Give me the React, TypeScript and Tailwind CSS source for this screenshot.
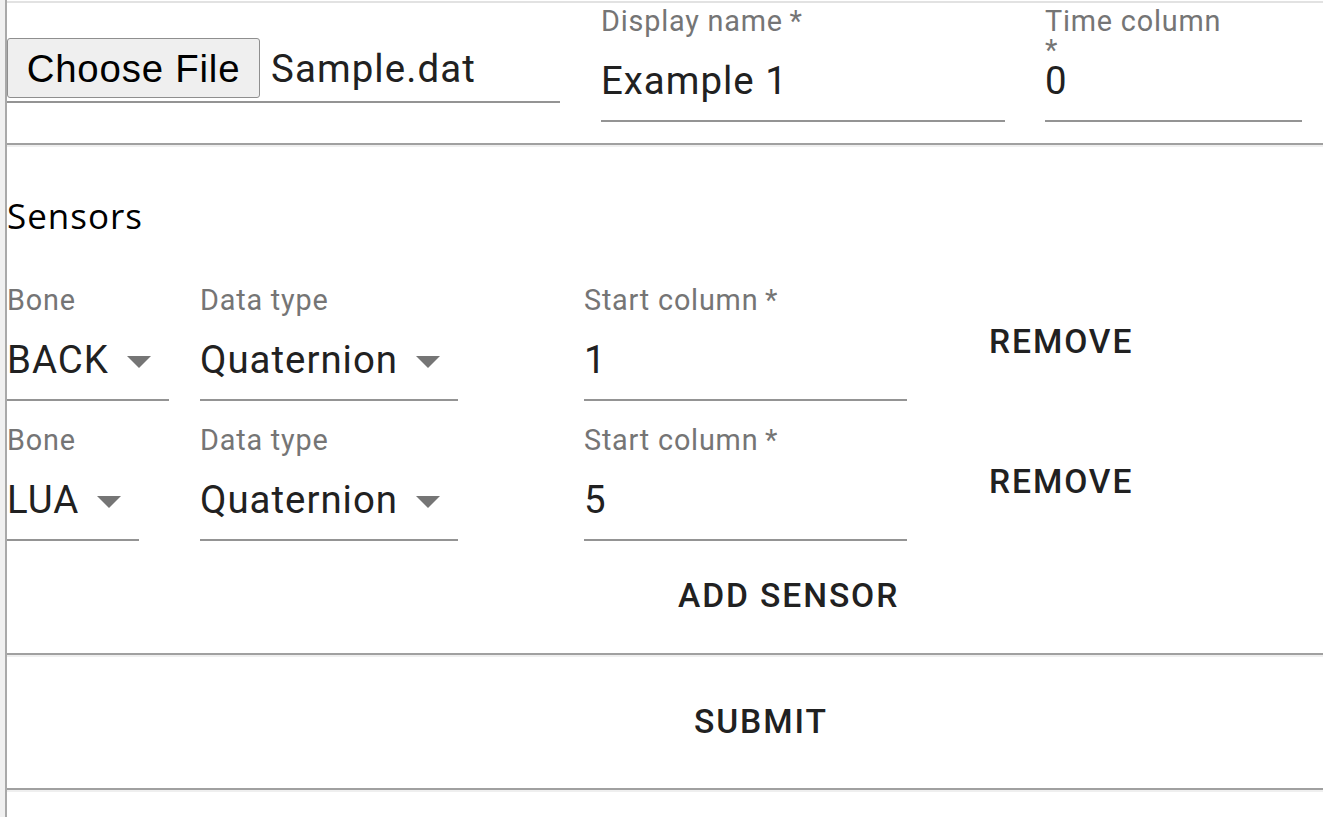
import React from 'react';

interface FieldProps {
    label: React.ReactNode;
    value: string;
    select?: boolean;
    className?: string;
}

const ArrowDropDown = () => (
    <svg viewBox="7 10 10 5" className="w-[24px] h-[12px] fill-[#757575]">
        <path d="M7 10l5 5 5-5z" />
    </svg>
);

const Field: React.FC<FieldProps> = ({ label, value, select, className }) => (
    <div className={`flex flex-col font-['Roboto',sans-serif] ${className ?? ''}`}>
        <div className="h-[28.8px] text-[28.8px] leading-[28.8px] tracking-[0.8px] text-[#757575] whitespace-nowrap">
            {label}
        </div>
        <div className="mt-[22.6px] flex items-start">
            <span className="text-[38.4px] leading-[45px] tracking-[1px] text-[#212121] whitespace-nowrap">{value}</span>
            {select && (
                <span className="w-[60px] pl-[18px] pt-[19.3px] flex">
                    <ArrowDropDown />
                </span>
            )}
        </div>
        <div className="mt-[16.6px] h-[2.4px] bg-[#949494]" />
    </div>
);

const Divider = () => (
    <div className="h-[4px] border-t-[2px] border-t-[#a0a0a0] border-b-[2px] border-b-[#efefef]" />
);

const TextButton: React.FC<{ children: React.ReactNode; className?: string }> = ({ children, className }) => (
    <button
        className={`font-['Roboto',sans-serif] text-[33.6px] leading-[58.8px] font-medium tracking-[1.9px] text-[#212121] uppercase ${className ?? ''}`}
    >
        {children}
    </button>
);

const SensorRow: React.FC<{ bone: string; start: string; className?: string }> = ({ bone, start, className }) => (
    <div className={`flex items-start ${className ?? ''}`}>
        <div className="w-[193px]">
            <Field label="Bone" value={bone} select className="w-fit" />
        </div>
        <div className="w-[384px]">
            <Field label="Data type" value="Quaternion" select className="w-fit" />
        </div>
        <div className="w-[405px]">
            <Field label={<>Start column&thinsp;*</>} value={start} className="w-[323px]" />
        </div>
        <TextButton className="mt-[27px]">Remove</TextButton>
    </div>
);

export default function App() {
    return (
        <div className="flex h-[817px] overflow-hidden bg-white">
            <div className="w-[5px] bg-[#f0f0f0]" />
            <div className="w-[2px] bg-[#a9a9a9]" />
            <div className="flex-1 min-w-0 flex flex-col">
                <div className="mt-[1px] h-[2px] bg-[#e2e2e2]" />

                <div className="h-[140px] flex items-start">
                    <div className="w-[553px] mt-[35px] flex flex-col">
                        <div className="h-[60px] flex items-center">
                            <button className="w-[253px] h-[60px] rounded-[3px] border border-[#8f8f8f] bg-[#efefef] font-['Liberation_Sans',Arial,sans-serif] text-[38.4px] leading-[45px] tracking-[0.8px] text-black">
                                Choose File
                            </button>
                            <span className="ml-[11px] font-['Roboto',sans-serif] text-[38.4px] leading-[45px] tracking-[1.1px] text-[#212121]">
                                Sample.dat
                            </span>
                        </div>
                        <div className="mt-[3px] h-[2.4px] bg-[#949494]" />
                    </div>
                    <Field
                        label={<>Display name&thinsp;*</>}
                        value="Example 1"
                        className="ml-[41px] w-[404px] mt-[3.75px]"
                    />
                    <Field
                        label={<>Time column<br />*</>}
                        value="0"
                        className="ml-[40px] w-[257px] mt-[3.75px]"
                    />
                </div>

                <Divider />

                <h2 className="mt-[49px] font-['Open_Sans',sans-serif] text-[35px] leading-[40px] tracking-[1px] text-black">
                    Sensors
                </h2>
                <SensorRow bone="BACK" start="1" className="mt-[49.75px]" />
                <SensorRow bone="LUA" start="5" className="mt-[24.6px]" />
                <div className="mt-[25.7px] pl-[671px] flex">
                    <TextButton>Add Sensor</TextButton>
                </div>

                <div className="mt-[27px]">
                    <Divider />
                </div>

                <div className="mt-[36.5px] pl-[687px] flex">
                    <TextButton>Submit</TextButton>
                </div>

                <div className="mt-[36px]">
                    <Divider />
                </div>
            </div>
        </div>
    );
}
